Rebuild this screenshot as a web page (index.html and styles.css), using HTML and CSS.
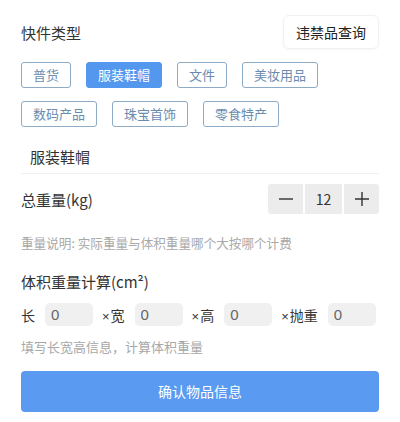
FILE: index.html
```html
<!DOCTYPE html>
<html lang="zh-CN">
<head>
    <meta charset="UTF-8">
    <meta name="viewport" content="width=device-width, initial-scale=1.0">
    <title>快件信息</title>
    <link rel="stylesheet" href="styles.css">
</head>
<body>
    <div class="goods">
        <div class="head">
            <h3>快件类型</h3>
            <span class="query">违禁品查询</span>
        </div>
        <ul class="tags">
            <li>普货</li>
            <li class="current">服装鞋帽</li>
            <li>文件</li>
            <li>美妆用品</li>
            <li>数码产品</li>
            <li>珠宝首饰</li>
            <li>零食特产</li>
        </ul>
        <div class="picked">服装鞋帽</div>

        <div class="weight">
            <h3>总重量(kg)</h3>
            <div class="stepper">
                <span class="minus">
                    <svg width="14" height="14" viewBox="0 0 14 14"><path d="M0 7h14" stroke="#333" stroke-width="1.4"/></svg>
                </span>
                <span class="num">12</span>
                <span class="plus">
                    <svg width="14" height="14" viewBox="0 0 14 14"><path d="M0 7h14M7 0v14" stroke="#333" stroke-width="1.4"/></svg>
                </span>
            </div>
        </div>
        <p class="tip">重量说明: 实际重量与体积重量哪个大按哪个计费</p>

        <h3 class="vol-title">体积重量计算(cm²)</h3>
        <div class="sizes">
            <label>长</label><input type="text" value="0">
            <label><i>×</i>宽</label><input type="text" value="0">
            <label><i>×</i>高</label><input type="text" value="0">
            <label><i>×</i>抛重</label><input type="text" value="0">
        </div>
        <p class="tip hint">填写长宽高信息，计算体积重量</p>

        <div class="confirm">确认物品信息</div>
    </div>
</body>
</html>
```
FILE: styles.css
```css
* {
    padding: 0;
    margin: 0;
    box-sizing: border-box;
}

body {
    background: #fff;
    font-family: "Noto Sans CJK SC", "Liberation Sans", sans-serif;
    color: #333;
}

ul {
    list-style: none;
}

h3 {
    font-size: 15px;
    font-weight: normal;
    color: #333;
}

.goods {
    width: 400px;
    padding: 15px 21px 0;
}

.head {
    display: flex;
    justify-content: space-between;
    align-items: center;
    height: 34px;
}

.head .query {
    width: 96px;
    height: 34px;
    line-height: 32px;
    text-align: center;
    font-size: 14px;
    color: #222;
    border: 1px solid #f1f1f1;
    border-radius: 6px;
    box-shadow: 0 1px 3px rgba(0, 0, 0, 0.04);
}

.tags {
    display: flex;
    flex-wrap: wrap;
    gap: 13px 15px;
    margin-top: 13px;
}

.tags li {
    height: 26px;
    line-height: 24px;
    padding: 0 11px;
    font-size: 13px;
    color: #6a8cae;
    border: 1px solid #8eabc6;
    border-radius: 3px;
}

.tags li.current {
    background: #5497ee;
    border-color: #5497ee;
    color: #fff;
}

.picked {
    margin-top: 16px;
    height: 31px;
    line-height: 28px;
    padding-left: 9px;
    font-size: 15px;
    color: #333;
    border-bottom: 1px solid #f0f0f0;
}

.weight {
    display: flex;
    justify-content: space-between;
    align-items: center;
    margin-top: 10px;
}

.stepper {
    display: flex;
    gap: 2px;
}

.stepper span {
    display: flex;
    align-items: center;
    justify-content: center;
    width: 35px;
    height: 30px;
    background: #ececec;
    font-size: 14px;
    color: #333;
}

.stepper .num {
    width: 37px;
}

.stepper .minus {
    border-radius: 3px 0 0 3px;
}

.stepper .plus {
    border-radius: 0 3px 3px 0;
}

.tip {
    margin-top: 20px;
    font-size: 12.6px;
    line-height: 18px;
    color: #a8a8a8;
}

.vol-title {
    margin-top: 19px;
    line-height: 22px;
}

.sizes {
    display: flex;
    align-items: center;
    margin-top: 10px;
}

.sizes label {
    flex-shrink: 0;
    white-space: nowrap;
    font-size: 14px;
    color: #333;
    margin-right: 10px;
}

.sizes label i {
    font-style: normal;
    font-family: "Liberation Sans", sans-serif;
    font-size: 13px;
    margin-right: 1px;
}

.sizes input {
    flex-shrink: 0;
    width: 48px;
    height: 23px;
    border: none;
    outline: none;
    background: #f0f0f0;
    border-radius: 5px;
    padding-left: 6px;
    font-family: "Liberation Sans", sans-serif;
    font-size: 15px;
    color: #666;
    margin-right: 9px;
}

.sizes input:last-child {
    margin-right: 0;
}

.hint {
    margin-top: 12px;
    font-size: 13px;
}

.confirm {
    margin-top: 15px;
    height: 41px;
    line-height: 41px;
    text-align: center;
    background: #5a9bf1;
    border-radius: 4px;
    font-size: 14px;
    color: #fff;
}
```
